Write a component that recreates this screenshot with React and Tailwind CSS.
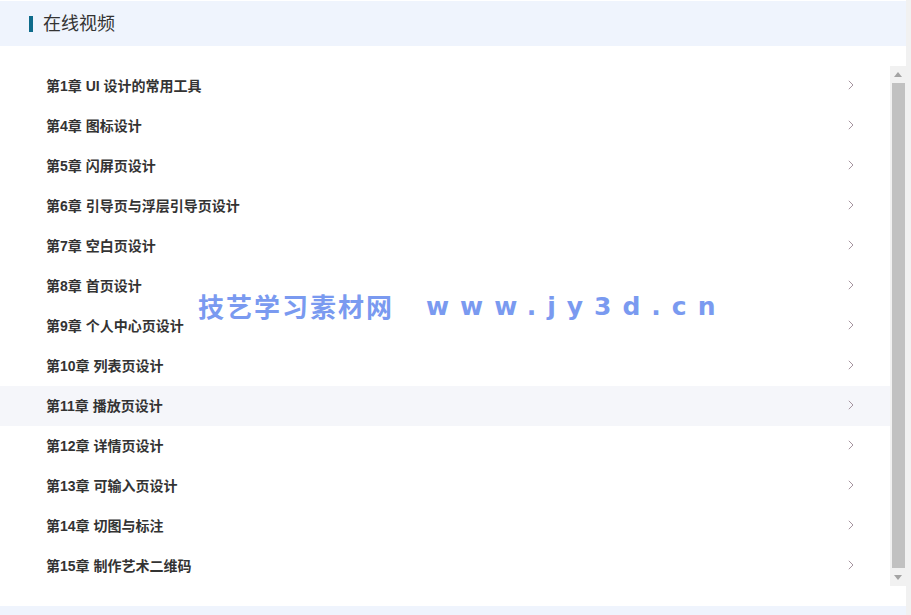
import React from "react";

const chapters = [
  "第1章 UI 设计的常用工具",
  "第4章 图标设计",
  "第5章 闪屏页设计",
  "第6章 引导页与浮层引导页设计",
  "第7章 空白页设计",
  "第8章 首页设计",
  "第9章 个人中心页设计",
  "第10章 列表页设计",
  "第11章 播放页设计",
  "第12章 详情页设计",
  "第13章 可输入页设计",
  "第14章 切图与标注",
  "第15章 制作艺术二维码",
];

function Chevron() {
  return (
    <svg width="6" height="10" viewBox="0 0 6 10" fill="none" className="mb-[2px]">
      <polyline points="0.8,0.8 5,5 0.8,9.2" stroke="#a5949f" strokeWidth="1" />
    </svg>
  );
}

export default function App() {
  return (
    <div
      className="relative w-[911px] h-[615px] flex bg-white overflow-hidden"
      style={{ fontFamily: '"Liberation Sans", Arial, "Noto Sans CJK SC", sans-serif' }}
    >
      <div className="w-[906px] flex flex-col">
        <div className="h-[1px] bg-white" />
        <div className="h-[45px] bg-[#eff4fd] flex items-center pl-[29px]">
          <div className="w-[4px] h-[16px] bg-[#0e6b8b] mr-[10px]" />
          <span className="text-[18px] text-[#333] leading-none">在线视频</span>
        </div>
        <div className="h-[20px]" />
        <div className="h-[520px] flex">
          <div className="w-[890px] flex flex-col">
            {chapters.map((c, i) => (
              <div
                key={c}
                className={`h-[40px] flex items-center justify-between pl-[46px] pr-[36px] ${
                  i === 8 ? "bg-[#f5f6fa]" : ""
                }`}
              >
                <span className="text-[14px] font-bold text-[#333]">{c}</span>
                <Chevron />
              </div>
            ))}
          </div>
          <div className="w-[16px] bg-[#f1f1f1] flex flex-col items-center">
            <div className="h-[17px] flex items-center justify-center">
              <svg width="8" height="5" viewBox="0 0 8 5">
                <polygon points="4,0 8,5 0,5" fill="#a3a3a3" />
              </svg>
            </div>
            <div className="w-[13px] flex-1 bg-[#c1c1c1]" />
            <div className="h-[18px] flex items-center justify-center">
              <svg width="8" height="5" viewBox="0 0 8 5">
                <polygon points="0,0 8,0 4,5" fill="#a3a3a3" />
              </svg>
            </div>
          </div>
        </div>
        <div className="h-[20px]" />
        <div className="flex-1 bg-[#eff4fd]" />
      </div>
      <div className="w-[5px] bg-[#f1f1f1]" />

      <div
        className="absolute left-[198px] top-[293px] flex items-center text-[#7a9af0] font-bold pointer-events-none"
        style={{ fontFamily: '"Noto Sans CJK SC", sans-serif' }}
      >
        <span className="text-[26px] tracking-[2px] leading-none">技艺学习素材网</span>
        <span
          className="ml-[32px] text-[25px] tracking-[11px] leading-none"
          style={{ fontFamily: '"DejaVu Sans", sans-serif' }}
        >
          www.jy3d.cn
        </span>
      </div>
    </div>
  );
}
